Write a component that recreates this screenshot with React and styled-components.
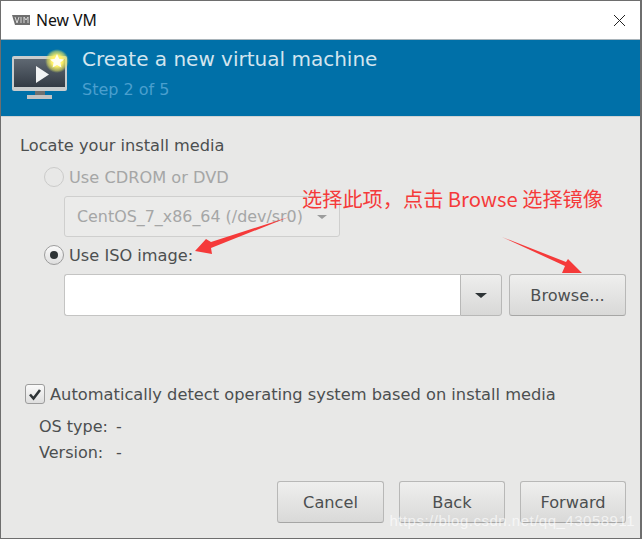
import React from "react";
import styled, { createGlobalStyle } from "styled-components";

const Global = createGlobalStyle`
  html, body { margin: 0; padding: 0; background: #fff; }
  #root { width: 642px; height: 540px; overflow: hidden; }
`;

const Window = styled.div`
  position: relative;
  width: 642px;
  height: 539px;
  box-sizing: border-box;
  border: 1px solid #6e6e6e;
  border-width: 1px 2px 1px 1px;
  background: #e8e8e7;
  font-family: "DejaVu Sans", sans-serif;
  color: #4c4f50;
  display: flex;
  flex-direction: column;
  overflow: hidden;
`;

const TitleBar = styled.div`
  height: 38px;
  background: #fff;
  display: flex;
  align-items: center;
  padding: 0 14px 0 10px;
  gap: 5px;
  font-family: "Noto Sans", "Open Sans", sans-serif;
  font-size: 15.8px;
  color: #111;
  flex: none;
`;

const TitleText = styled.span`
  flex: 1;
`;

const Header = styled.div`
  height: 78px;
  flex: none;
  background: #0070a8;
  border-top: 1px solid #a9b4ba;
  border-bottom: 1px solid #cfd3d4;
  display: flex;
  padding-left: 10px;
  gap: 11px;
  box-sizing: border-box;
`;

const HeaderText = styled.div`
  padding-top: 6px;
  display: flex;
  flex-direction: column;
  gap: 9px;
`;

const HeaderTitle = styled.div`
  font-size: 20px;
  line-height: 26px;
  color: #d3e5ef;
`;

const HeaderStep = styled.div`
  font-size: 16px;
  line-height: 18px;
  color: #4a9fce;
`;

const Body = styled.div`
  flex: 1;
  display: flex;
  flex-direction: column;
  padding: 19px 14px 0 19px;
`;

const SectionLabel = styled.div`
  font-size: 16.2px;
  line-height: 20px;
`;

const MediaGroup = styled.div`
  padding: 10px 0 0 24px;
  display: flex;
  flex-direction: column;
`;

const RadioRow = styled.label`
  display: flex;
  align-items: center;
  gap: 5px;
  height: 22px;
  font-size: 16.2px;
  white-space: nowrap;
  color: ${(p) => (p.$disabled ? "#a5a6a6" : "#4c4f50")};
`;

const RadioCircle = styled.span`
  width: 20px;
  height: 20px;
  border-radius: 50%;
  box-sizing: border-box;
  border: 1px solid ${(p) => (p.$disabled ? "#cbcbca" : "#9c9c9c")};
  background: ${(p) => (p.$disabled ? "#e8e8e7" : "linear-gradient(#fafafa, #dedede)")};
  display: flex;
  align-items: center;
  justify-content: center;
  flex: none;
  &::after {
    content: "";
    display: ${(p) => (p.$checked ? "block" : "none")};
    width: 8px;
    height: 8px;
    border-radius: 50%;
    background: #2e3436;
  }
`;

const IndentRow = styled.div`
  margin-left: 20px;
  display: flex;
`;

const Combo = styled.div`
  width: 276px;
  height: 41px;
  margin-top: 8px;
  margin-bottom: 7px;
  box-sizing: border-box;
  border: 1px solid #cfcfce;
  border-radius: 3px;
  background: #ebebea;
  color: #a5a6a6;
  display: flex;
  align-items: center;
  padding: 0 12px 0 12px;
  justify-content: space-between;
  font-size: 15.9px;
  white-space: nowrap;
`;

const Caret = styled.span`
  width: 0;
  height: 0;
  border-left: ${(p) => p.$size}px solid transparent;
  border-right: ${(p) => p.$size}px solid transparent;
  border-top: ${(p) => p.$size - 1}px solid ${(p) => p.$color};
  flex: none;
`;

const IsoRow = styled(IndentRow)`
  margin-top: 8px;
  gap: 7px;
`;

const IsoInput = styled.div`
  width: 396px;
  height: 42px;
  box-sizing: border-box;
  background: #fff;
  border: 1px solid #c4c4c3;
  border-right: none;
  border-radius: 3px 0 0 3px;
`;

const IsoDrop = styled.div`
  width: 42px;
  height: 42px;
  box-sizing: border-box;
  border: 1px solid #b8b8b7;
  border-radius: 0 3px 3px 0;
  background: linear-gradient(#eeeeed, #d8d8d7);
  display: flex;
  align-items: center;
  justify-content: center;
`;

const IsoCombo = styled.div`
  display: flex;
`;

const Button = styled.div`
  width: ${(p) => p.$w}px;
  height: ${(p) => p.$h}px;
  box-sizing: border-box;
  border: 1px solid #b8b8b7;
  border-bottom-color: #a6a6a5;
  border-radius: 3px;
  background: linear-gradient(#efefee, #d9d9d8);
  display: flex;
  align-items: center;
  justify-content: center;
  font-size: 16.2px;
  color: #4c4f50;
  flex: none;
`;

const DetectRow = styled.div`
  margin-top: 68px;
  margin-left: 5px;
  display: flex;
  align-items: center;
  gap: 5px;
  height: 20px;
  font-size: 16.25px;
  white-space: nowrap;
`;

const CheckBox = styled.span`
  width: 20px;
  height: 20px;
  box-sizing: border-box;
  border: 1px solid #9c9c9c;
  border-radius: 3px;
  background: linear-gradient(#fafafa, #dedede);
  display: flex;
  align-items: center;
  justify-content: center;
  flex: none;
`;

const InfoGrid = styled.div`
  margin: 13px 0 0 19px;
  display: grid;
  grid-template-columns: max-content max-content;
  column-gap: 8px;
  row-gap: 6px;
  font-size: 16px;
  line-height: 20px;
`;

const Footer = styled.div`
  margin-top: auto;
  padding-bottom: 15px;
  display: flex;
  justify-content: flex-end;
  gap: 15px;
`;

const Annotation = styled.div`
  position: absolute;
  left: 301px;
  top: 185px;
  font-family: "Noto Sans CJK SC", "Noto Sans", sans-serif;
  font-size: 20.2px;
  line-height: 26px;
  color: #f53a3a;
  white-space: nowrap;
`;

const ArrowLayer = styled.svg`
  position: absolute;
  left: -1px;
  top: -1px;
  pointer-events: none;
`;

const Watermark = styled.div`
  position: absolute;
  right: 5px;
  top: 511px;
  font-family: "Liberation Sans", sans-serif;
  font-size: 15px;
  line-height: 18px;
  color: rgba(255, 255, 255, 0.65);
  letter-spacing: 0.5px;
  white-space: nowrap;
`;

const VmIcon = () => (
  <svg width="60" height="64" viewBox="0 0 60 64" style={{ flex: "none" }}>
    <defs>
      <radialGradient id="glow">
        <stop offset="0.45" stopColor="#fff36a" />
        <stop offset="0.8" stopColor="#e8e860" stopOpacity="0.55" />
        <stop offset="1" stopColor="#c0d860" stopOpacity="0" />
      </radialGradient>
      <linearGradient id="scr" x1="0" y1="0" x2="0" y2="1">
        <stop offset="0" stopColor="#5f6872" />
        <stop offset="1" stopColor="#333b45" />
      </linearGradient>
    </defs>
    <rect x="1" y="16" width="55" height="35" rx="2" fill="#c9cccd" />
    <rect x="3" y="19" width="51" height="28" fill="url(#scr)" />
    <rect x="24" y="51" width="10" height="4" fill="#6f7070" />
    <rect x="16" y="55" width="25" height="4" fill="#c3c3c3" />
    <path d="M25 26 L38 34.5 L25 43 Z" fill="#f1f3f4" />
    <circle cx="46" cy="21" r="12" fill="url(#glow)" />
    <path d="M46 14 L48.2 18.8 L53 19.4 L49.4 22.6 L50.4 27.4 L46 25 L41.6 27.4 L42.6 22.6 L39 19.4 L43.8 18.8 Z" fill="#fffef0" />
  </svg>
);

const AppIcon = () => (
  <svg width="20" height="12" viewBox="0 0 20 12" style={{ flex: "none" }}>
    <path d="M1 1 H19 V11 H4 Z" fill="#6f6f6f" />
    <path d="M4 3 L6 9 L8 3 M10 3 V9 M13 3 V9 M13 3 L15 6 L17 3 V9" stroke="#d6d6d6" strokeWidth="1" fill="none" />
  </svg>
);

export default function App() {
  return (
    <Window>
      <Global />
      <TitleBar>
        <AppIcon />
        <TitleText>New VM</TitleText>
        <svg width="13" height="13" viewBox="0 0 13 13">
          <path d="M1 1 L12 12 M12 1 L1 12" stroke="#222" strokeWidth="1" fill="none" />
        </svg>
      </TitleBar>
      <Header>
        <VmIcon />
        <HeaderText>
          <HeaderTitle>Create a new virtual machine</HeaderTitle>
          <HeaderStep>Step 2 of 5</HeaderStep>
        </HeaderText>
      </Header>
      <Body>
        <SectionLabel>Locate your install media</SectionLabel>
        <MediaGroup>
          <RadioRow $disabled>
            <RadioCircle $disabled />
            Use CDROM or DVD
          </RadioRow>
          <IndentRow>
            <Combo>
              CentOS_7_x86_64 (/dev/sr0)
              <Caret $size={5} $color="#9b9c9c" />
            </Combo>
          </IndentRow>
          <RadioRow>
            <RadioCircle $checked />
            Use ISO image:
          </RadioRow>
          <IsoRow>
            <IsoCombo>
              <IsoInput />
              <IsoDrop>
                <Caret $size={6} $color="#2e3436" />
              </IsoDrop>
            </IsoCombo>
            <Button $w={117} $h={42}>Browse...</Button>
          </IsoRow>
        </MediaGroup>
        <DetectRow>
          <CheckBox>
            <svg width="14" height="13" viewBox="0 0 14 13">
              <path d="M2 6.5 L5.5 10.5 L12 2" stroke="#2e3436" strokeWidth="2.6" fill="none" />
            </svg>
          </CheckBox>
          Automatically detect operating system based on install media
        </DetectRow>
        <InfoGrid>
          <span>OS type:</span>
          <span>-</span>
          <span>Version:</span>
          <span>-</span>
        </InfoGrid>
        <Footer>
          <Button $w={107} $h={42}>Cancel</Button>
          <Button $w={106} $h={42}>Back</Button>
          <Button $w={106} $h={42}>Forward</Button>
        </Footer>
      </Body>
      <Annotation>选择此项，点击 Browse 选择镜像</Annotation>
      <ArrowLayer width="642" height="540" viewBox="0 0 642 540">
        <path d="M289 217 L211 242 L206 239 L195 251 L212 254 L211 248 Z" fill="#f53a3a" />
        <path d="M502 237 L566 262 L568 259 L582 273 L562 273 L565 266 Z" fill="#f53a3a" />
      </ArrowLayer>
      <Watermark>https://blog.csdn.net/qq_43058911</Watermark>
    </Window>
  );
}
